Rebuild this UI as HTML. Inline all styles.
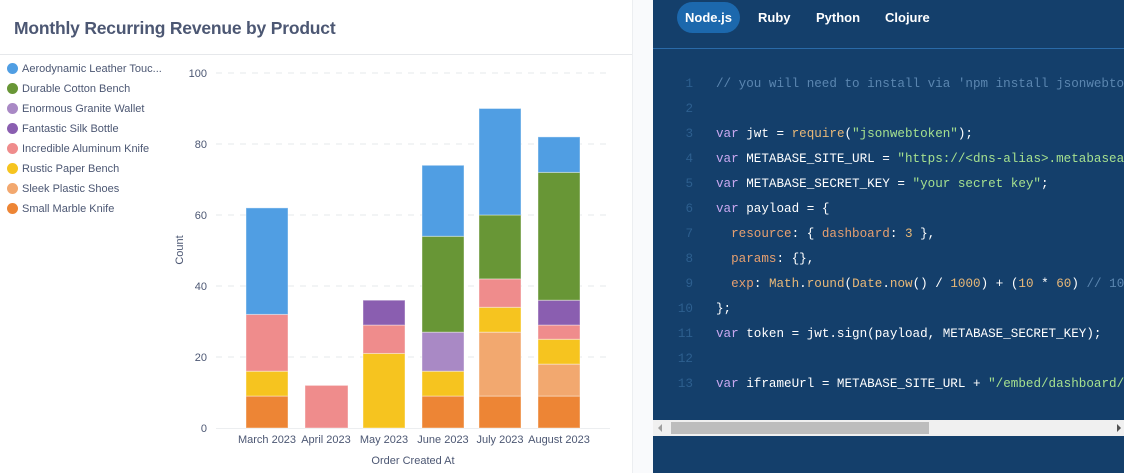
<!DOCTYPE html>
<html><head><meta charset="utf-8"><style>
html,body{margin:0;padding:0;width:1124px;height:473px;overflow:hidden;background:#fff;font-family:"Liberation Sans",sans-serif}
.left{position:absolute;left:0;top:0;width:632px;height:473px;background:#fff}
.strip{position:absolute;left:632px;top:0;width:21px;height:473px;background:#f9fafc;border-left:1px solid #eceef1}
.title{position:absolute;left:14px;top:18px;font-size:17.5px;font-weight:bold;color:#4c5773;letter-spacing:-0.2px}
.hr{position:absolute;left:0;top:54px;width:632px;height:1px;background:#e6e8eb}
.leg{position:absolute;left:7px;top:61px;font-size:11px;color:#4c5773}
.leg div{height:20px;line-height:16px;display:flex;align-items:flex-start}
.leg span{display:inline-block;width:11px;height:11px;border-radius:50%;margin:2px 4px 0 0}
.dark{position:absolute;left:653px;top:0;width:471px;height:473px;background:#143f6b;overflow:hidden}
.tabs{position:absolute;left:0;top:0;width:471px;height:48px;border-bottom:1px solid #2a6aa8}
.tab{position:absolute;top:2px;height:31px;line-height:31px;color:#fff;font-size:13px;font-weight:bold}
.code{position:absolute;left:0;top:73px;font-family:"Liberation Mono",monospace;font-size:12.6px;color:#fff}
.code div{height:25px;line-height:22px;white-space:pre}
.ln{display:inline-block;width:40px;text-align:right;color:#2d5f8f;margin-right:23px}
.k{color:#c9a8f0}.s{color:#a5e08f}.c{color:#5b86b0}.o{color:#e7a070}.f{color:#e8b878}
.sb{position:absolute;left:0;top:420px;width:471px;height:16px;background:#f0f0f0}
</style></head><body>
<div class="left">
<div class="title">Monthly Recurring Revenue by Product</div>
<div class="hr"></div>
<div class="leg">
<div><span style="background:#509ee3"></span>Aerodynamic Leather Touc...</div>
<div><span style="background:#689636"></span>Durable Cotton Bench</div>
<div><span style="background:#a989c5"></span>Enormous Granite Wallet</div>
<div><span style="background:#8a5eb0"></span>Fantastic Silk Bottle</div>
<div><span style="background:#ef8c8c"></span>Incredible Aluminum Knife</div>
<div><span style="background:#f6c41f"></span>Rustic Paper Bench</div>
<div><span style="background:#f2a86f"></span>Sleek Plastic Shoes</div>
<div><span style="background:#ed8535"></span>Small Marble Knife</div>
</div>
<svg width="632" height="473" style="position:absolute;left:0;top:0" font-family="Liberation Sans, sans-serif" font-size="11" fill="#4c5773">
<g stroke="#e6e8eb" stroke-dasharray="6,6"><line x1="216" x2="610" y1="73" y2="73"/><line x1="216" x2="610" y1="144" y2="144"/><line x1="216" x2="610" y1="215" y2="215"/><line x1="216" x2="610" y1="286" y2="286"/><line x1="216" x2="610" y1="357" y2="357"/></g>
<line x1="216" x2="610" y1="428.5" y2="428.5" stroke="#eceef0"/>
<g text-anchor="end"><text x="207" y="77">100</text><text x="207" y="148">80</text><text x="207" y="219">60</text><text x="207" y="290">40</text><text x="207" y="361">20</text><text x="207" y="432">0</text></g>
<text transform="translate(183,250) rotate(-90)" text-anchor="middle" font-size="11">Count</text>
<g stroke="#fff" stroke-opacity="0.4" stroke-width="1">
<rect x="246" y="396.05" width="42" height="31.95" fill="#ed8535"/><rect x="246" y="371.2" width="42" height="24.85" fill="#f6c41f"/><rect x="246" y="314.4" width="42" height="56.8" fill="#ef8c8c"/><rect x="246" y="207.9" width="42" height="106.5" fill="#509ee3"/>
<rect x="305" y="385.4" width="43" height="42.6" fill="#ef8c8c"/>
<rect x="363" y="353.45" width="42" height="74.55" fill="#f6c41f"/><rect x="363" y="325.05" width="42" height="28.4" fill="#ef8c8c"/><rect x="363" y="300.2" width="42" height="24.85" fill="#8a5eb0"/>
<rect x="422" y="396.05" width="42" height="31.95" fill="#ed8535"/><rect x="422" y="371.2" width="42" height="24.85" fill="#f6c41f"/><rect x="422" y="332.15" width="42" height="39.05" fill="#a989c5"/><rect x="422" y="236.3" width="42" height="95.85" fill="#689636"/><rect x="422" y="165.3" width="42" height="71" fill="#509ee3"/>
<rect x="479" y="396.05" width="42" height="31.95" fill="#ed8535"/><rect x="479" y="332.15" width="42" height="63.9" fill="#f2a86f"/><rect x="479" y="307.3" width="42" height="24.85" fill="#f6c41f"/><rect x="479" y="278.9" width="42" height="28.4" fill="#ef8c8c"/><rect x="479" y="215" width="42" height="63.9" fill="#689636"/><rect x="479" y="108.5" width="42" height="106.5" fill="#509ee3"/>
<rect x="538" y="396.05" width="42" height="31.95" fill="#ed8535"/><rect x="538" y="364.1" width="42" height="31.95" fill="#f2a86f"/><rect x="538" y="339.25" width="42" height="24.85" fill="#f6c41f"/><rect x="538" y="325.05" width="42" height="14.2" fill="#ef8c8c"/><rect x="538" y="300.2" width="42" height="24.85" fill="#8a5eb0"/><rect x="538" y="172.4" width="42" height="127.8" fill="#689636"/><rect x="538" y="136.9" width="42" height="35.5" fill="#509ee3"/>
</g>
<g text-anchor="middle"><text x="267" y="443">March 2023</text><text x="326" y="443">April 2023</text><text x="384" y="443">May 2023</text><text x="443" y="443">June 2023</text><text x="500" y="443">July 2023</text><text x="559" y="443">August 2023</text></g>
<text x="413" y="464" text-anchor="middle">Order Created At</text>
</svg>
</div>
<div class="strip"></div>
<div class="dark">
<div class="tabs">
<div class="tab" style="left:24px;width:63px;background:#1c68ad;border-radius:16px;text-align:center">Node.js</div>
<div class="tab" style="left:105px">Ruby</div>
<div class="tab" style="left:163px">Python</div>
<div class="tab" style="left:232px">Clojure</div>
</div>
<div class="code"><div><span class="ln">1</span><span class="c">// you will need to install via 'npm install jsonwebtoken'</span></div><div><span class="ln">2</span></div><div><span class="ln">3</span><span class="k">var</span> jwt = <span class="f">require</span>(<span class="s">"jsonwebtoken"</span>);</div><div><span class="ln">4</span><span class="k">var</span> METABASE_SITE_URL = <span class="s">"https://&lt;dns-alias&gt;.metabaseapp.com"</span>;</div><div><span class="ln">5</span><span class="k">var</span> METABASE_SECRET_KEY = <span class="s">"your secret key"</span>;</div><div><span class="ln">6</span><span class="k">var</span> payload = {</div><div><span class="ln">7</span>  <span class="o">resource</span>: { <span class="o">dashboard</span>: <span class="f">3</span> },</div><div><span class="ln">8</span>  <span class="o">params</span>: {},</div><div><span class="ln">9</span>  <span class="o">exp</span>: <span class="f">Math</span>.<span class="f">round</span>(<span class="f">Date</span>.<span class="f">now</span>() / <span class="f">1000</span>) + (<span class="f">10</span> * <span class="f">60</span>) <span class="c">// 10 minute</span></div><div><span class="ln">10</span>};</div><div><span class="ln">11</span><span class="k">var</span> token = jwt.sign(payload, METABASE_SECRET_KEY);</div><div><span class="ln">12</span></div><div><span class="ln">13</span><span class="k">var</span> iframeUrl = METABASE_SITE_URL + <span class="s">"/embed/dashboard/"</span></div></div>
<div class="sb">
<div style="position:absolute;left:5px;top:4px;width:0;height:0;border-top:4px solid transparent;border-bottom:4px solid transparent;border-right:4px solid #a0a0a0"></div>
<div style="position:absolute;left:18px;top:2px;width:258px;height:12px;background:#bdbdbd"></div>
<div style="position:absolute;left:464px;top:4px;width:0;height:0;border-top:4px solid transparent;border-bottom:4px solid transparent;border-left:4px solid #505050"></div>
</div>
</div>
</body></html>
